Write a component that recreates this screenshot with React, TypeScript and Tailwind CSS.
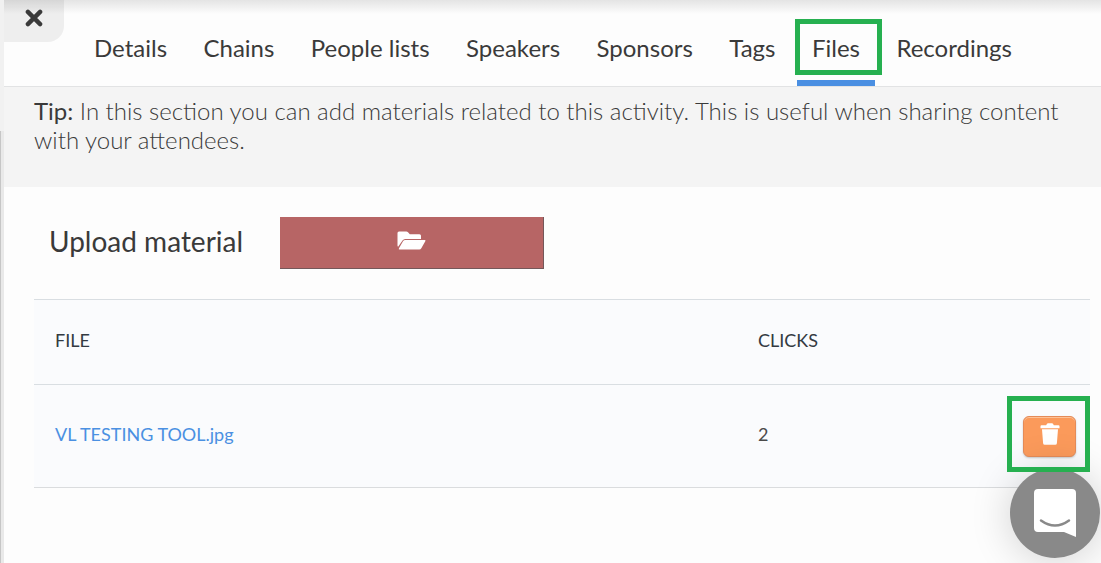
import React, { useState } from 'react';
import { clsx } from 'clsx';

const TABS = ['Details', 'Chains', 'People lists', 'Speakers', 'Sponsors', 'Tags', 'Files', 'Recordings'];

interface MaterialFile {
  id: string;
  name: string;
  clicks: number;
}

const INITIAL_FILES: MaterialFile[] = [{ id: 'f1', name: 'VL TESTING TOOL.jpg', clicks: 2 }];

const CloseIcon = () => (
  <svg viewBox="0 0 18 18" className="w-[18px] h-[18px]" fill="none" stroke="currentColor" strokeWidth="4.400" strokeLinecap="round">
    <path d="M2.900 2.900L15.100 15.100M15.100 2.900L2.900 15.100" />
  </svg>
);

const FolderIcon = () => (
  <svg viewBox="0 0 29 19" className="w-[29px] h-[19px]" fill="currentColor">
    <path d="M.5 2Q.5.5 2 .5H9.300Q10.300.5 11 1.300L12.800 3.200H22.500Q24 3.200 24 4.700V8H8.200Q6.500 8 5.500 9.500L1.300 15.600Q.5 15.800.5 14.500Z" />
    <path d="M8.300 9H27.700Q29 9 28.300 10.200L24.300 17.300Q23.700 18.500 22.300 18.500H2.500Q1.300 18.500 2 17.300L6 10.300Q6.800 9 8.300 9Z" />
  </svg>
);

const TrashIcon = () => (
  <svg viewBox="0 0 20 22" className="w-5 h-[22px]" fill="currentColor">
    <path d="M.5 3.200Q.5 2.200 1.500 2.200H6.200L7 .8Q7.300.3 8 .3H12Q12.700.3 13 .8L13.800 2.200H18.500Q19.500 2.200 19.500 3.200V5.200H.5Z" />
    <path d="M2 6.200H18L16.900 20.200Q16.800 21.800 15.200 21.800H4.800Q3.200 21.800 3.100 20.200Z" />
  </svg>
);

const ChatIcon = () => (
  <svg viewBox="0 0 42 48" className="w-[42px] h-12">
    <path d="M4 0H38Q42 0 42 4V48L30 43H4Q0 43 0 39V4Q0 0 4 0Z" fill="#fff" />
    <path d="M7 31.500Q21 41.500 35 31.500" fill="none" stroke="#898989" strokeWidth="2.500" strokeLinecap="round" />
  </svg>
);

const Highlight: React.FC<{ className: string }> = ({ className }) => (
  <span aria-hidden="true" className={clsx('absolute z-20 border-[5px] border-[#26b050] pointer-events-none', className)} />
);

const App: React.FC = () => {
  const [activeTab, setActiveTab] = useState('Files');
  const [files, setFiles] = useState(INITIAL_FILES);

  const removeFile = (id: string) => setFiles(prev => prev.filter(f => f.id !== id));

  return (
    <div className="min-h-screen flex bg-[#fdfdfd] text-[#3a3a3a] font-['Lato',sans-serif]">
      <div className="w-1 shrink-0 flex flex-col bg-[#e9e9e9]">
        <div className="h-[131px] bg-[#f1f1f1]" />
        <div className="flex-1 border-l border-[#c6c6c6]" />
      </div>

      <div className="flex-1 min-w-0">
        <header className="flex items-start border-b border-[#e2e3e4] bg-linear-to-b from-[#e4e4e4] to-[#fdfdfd] to-[14px]">
          <button aria-label="Close" className="w-[60px] h-[42px] shrink-0 flex justify-center pt-[9px] rounded-br-2xl bg-black/6">
            <CloseIcon />
          </button>
          <nav className="flex-1 max-w-[948px] flex justify-between ml-[15px] whitespace-nowrap">
            {TABS.map(tab => (
              <button
                key={tab}
                onClick={() => setActiveTab(tab)}
                className={clsx(
                  'relative h-[86px] px-[15px] pt-5 pb-1 text-2xl border-b-[6px]',
                  tab === activeTab ? 'border-[#4a8fe2]' : 'border-transparent'
                )}
              >
                {tab}
                {tab === 'Files' && <Highlight className="-left-0.5 top-[19px] w-[87px] h-14" />}
              </button>
            ))}
          </nav>
        </header>

        <p className="h-[100px] pl-[30px] pr-8 pt-[9px] bg-[#f4f4f4] text-2xl leading-[29px] font-light">
          <strong className="font-normal">Tip:</strong> In this section you can add materials related to this activity. This is useful when
          sharing content with your attendees.
        </p>

        <main className="pl-[30px] pr-[11px] pt-[30px]">
          <div className="flex items-center pl-[15px]">
            <span id="upload-label" className="pb-1 text-[28px] leading-9">Upload material</span>
            <button
              aria-labelledby="upload-label"
              className="ml-[37px] w-[264px] h-[52px] pb-1 flex items-center justify-center bg-[#b76565] text-white border-r border-b border-[#74585a]"
            >
              <FolderIcon />
            </button>
          </div>

          <table className="mt-[30px] w-full table-fixed border-collapse text-left text-lg bg-[#fafbfd]">
            <colgroup>
              <col className="w-2/3" />
              <col />
              <col className="w-[88px]" />
            </colgroup>
            <thead>
              <tr className="h-[85px] border-y border-[#d9dee2] text-[#333a42]">
                <th className="pl-[21px] pb-1 font-normal">FILE</th>
                <th className="pl-5 pb-1 font-normal">CLICKS</th>
                <th aria-label="Actions" />
              </tr>
            </thead>
            <tbody>
              {files.map(file => (
                <tr key={file.id} className="h-[103px] border-b border-[#dadcde]">
                  <td className="pl-[21px] pb-1">
                    <a href="#file" className="text-[#4a90e2]">{file.name}</a>
                  </td>
                  <td className="pl-5 pb-1 text-[#4a4a4a]">{file.clicks}</td>
                  <td>
                    <div className="relative w-[53px] h-[41px] ml-[21px]">
                      <button
                        aria-label={`Delete ${file.name}`}
                        onClick={() => removeFile(file.id)}
                        className="w-full h-full pb-1 flex items-center justify-center rounded-md bg-[#fb9a5b] text-white border border-[#e58b58] shadow-[inset_0_1px_0_#fdc196,0_1px_2px_#0003]"
                      >
                        <TrashIcon />
                      </button>
                      <Highlight className="-left-4 -top-5 w-[83px] h-[76px]" />
                    </div>
                  </td>
                </tr>
              ))}
            </tbody>
          </table>
        </main>
      </div>

      <button
        aria-label="Open chat"
        className="fixed right-px bottom-[5px] z-10 w-[90px] h-[90px] rounded-full bg-[#898989] flex items-center justify-center shadow-[0_2px_40px_#0000002e]"
      >
        <ChatIcon />
      </button>
    </div>
  );
};

export default App;
